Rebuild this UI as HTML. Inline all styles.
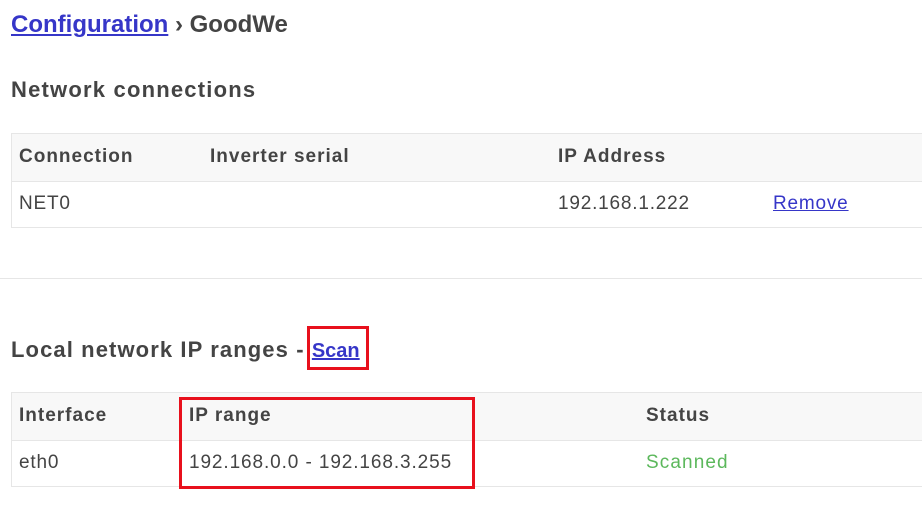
<!DOCTYPE html>
<html><head><style>
body{margin:0;width:922px;height:520px;background:#fff;font-family:"Liberation Sans",sans-serif;color:#444;position:relative;overflow:hidden}
.a{position:absolute;white-space:nowrap}
a{color:#3636c8;text-decoration:underline}
.t{position:absolute;left:11px;width:920px;height:95px;border:1px solid #e6e6e6;box-sizing:border-box}
.h{position:absolute;left:0;right:0;top:0;height:47px;background:#f8f8f8;border-bottom:1px solid #e6e6e6}
.c{font-size:19px;letter-spacing:0.8px}
.b{font-weight:bold;letter-spacing:1px}
.r{position:absolute;border:3px solid #e8101c;box-sizing:border-box}
</style></head><body>
<div class="a" style="left:11px;top:11px;font-size:24px;font-weight:bold"><a href="#">Configuration</a> › GoodWe</div>
<div class="a b" style="left:11px;top:77px;font-size:22px;letter-spacing:1.2px">Network connections</div>
<div class="t" style="top:133px"><div class="h"></div></div>
<div class="a c b" style="left:19px;top:146px">Connection</div>
<div class="a c b" style="left:210px;top:146px">Inverter serial</div>
<div class="a c b" style="left:558px;top:146px">IP Address</div>
<div class="a c" style="left:19px;top:193px">NET0</div>
<div class="a c" style="left:558px;top:193px">192.168.1.222</div>
<div class="a c" style="left:773px;top:193px"><a href="#">Remove</a></div>
<div class="a" style="left:0;top:278px;width:922px;height:1px;background:#e6e6e6"></div>
<div class="a b" style="left:11px;top:337px;font-size:22px;letter-spacing:1.1px">Local network IP ranges - <a href="#" style="font-size:20px;letter-spacing:0">Scan</a></div>
<div class="r" style="left:307px;top:326px;width:62px;height:44px"></div>
<div class="t" style="top:392px"><div class="h"></div></div>
<div class="a c b" style="left:19px;top:405px">Interface</div>
<div class="a c b" style="left:189px;top:405px">IP range</div>
<div class="a c b" style="left:646px;top:405px">Status</div>
<div class="a c" style="left:19px;top:452px">eth0</div>
<div class="a c" style="left:189px;top:452px;letter-spacing:0.9px">192.168.0.0 - 192.168.3.255</div>
<div class="a c" style="left:646px;top:452px;color:#5cb85c;letter-spacing:1.1px">Scanned</div>
<div class="r" style="left:179px;top:397px;width:296px;height:92px"></div>
</body></html>
